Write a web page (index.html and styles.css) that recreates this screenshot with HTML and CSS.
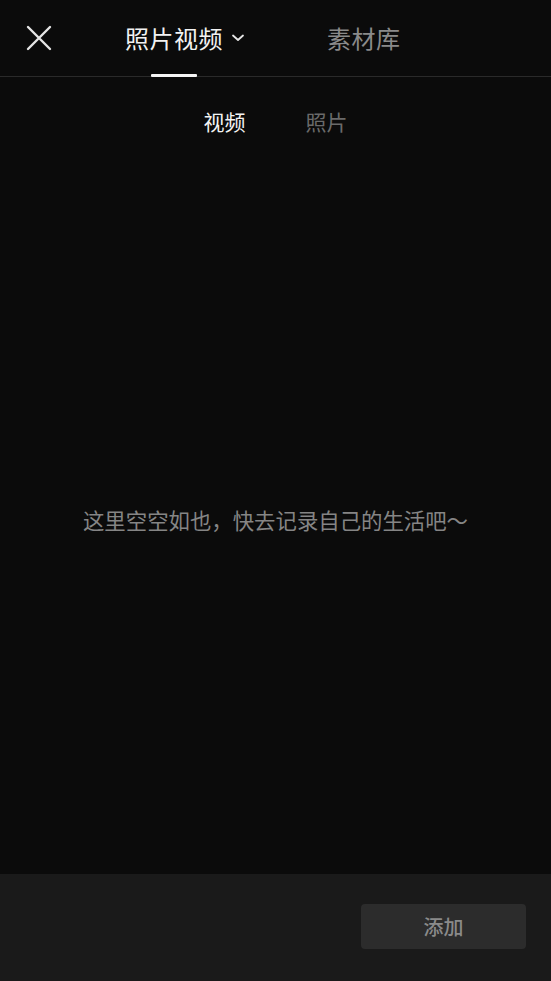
FILE: index.html
```html
<!DOCTYPE html>
<html lang="zh">
<head>
<meta charset="utf-8">
<link rel="stylesheet" href="styles.css">
</head>
<body>
<div class="app">
  <header class="topbar">
    <button class="close" aria-label="关闭">
      <svg width="26" height="26" viewBox="0 0 26 26"><path d="M2 2 L24 24 M24 2 L2 24" stroke="#e6e6e6" stroke-width="2.4" stroke-linecap="round"/></svg>
    </button>
    <div class="tab active">
      <span class="tab-label">照片视频</span>
      <svg class="chev" width="14" height="8" viewBox="0 0 14 8"><path d="M2 1.5 L7 6 L12 1.5" fill="none" stroke="#e6e6e6" stroke-width="1.8" stroke-linecap="round" stroke-linejoin="round"/></svg>
      <span class="underline"></span>
    </div>
    <div class="tab muted"><span class="tab-label">素材库</span></div>
  </header>
  <nav class="subtabs">
    <span class="sub active">视频</span>
    <span class="sub">照片</span>
  </nav>
  <main class="empty">
    <p>这里空空如也，快去记录自己的生活吧～</p>
  </main>
  <footer class="bottombar">
    <button class="add">添加</button>
  </footer>
</div>
</body>
</html>
```
FILE: styles.css
```css
* { box-sizing: border-box; }
html, body { margin: 0; padding: 0; height: 100%; }
body {
  background: #0b0b0b;
  font-family: "Noto Sans CJK SC", "Noto Sans", sans-serif;
  color: #eee;
}
.app {
  display: flex;
  flex-direction: column;
  height: 981px;
}
.topbar {
  height: 77px;
  border-bottom: 1px solid #2a2a2a;
  display: flex;
  align-items: center;
  position: relative;
}
.close {
  background: none;
  border: 0;
  padding: 0;
  margin-left: 26px;
  width: 26px;
  height: 26px;
  display: flex;
  margin-top: -1px;
}
.tab {
  position: relative;
  display: flex;
  align-items: center;
  height: 100%;
}
.tab.active { margin-left: 73px; }
.tab-label {
  font-size: 24px;
  line-height: 1;
  color: #f2f2f2;
  letter-spacing: 0.5px;
}
.chev { margin-left: 8px; margin-top: 0; }
.underline {
  position: absolute;
  left: 26px;
  bottom: -1px;
  width: 46px;
  height: 3px;
  border-radius: 1px;
  background: #f5f5f5;
}
.tab.muted { margin-left: 82px; }
.tab.muted .tab-label { color: #8a8a8a; }
.subtabs {
  display: flex;
  justify-content: center;
  gap: 60px;
  padding-top: 29px;
  height: 92px;
}
.sub {
  font-size: 21px;
  line-height: 30px;
  color: #6a6a6a;
}
.sub.active { color: #f4f4f4; }
.empty {
  flex: 1;
  display: flex;
  justify-content: center;
  padding-top: 336px;
}
.empty p {
  margin: 0;
  font-size: 21.4px;
  line-height: 30px;
  color: #858585;
}
.bottombar {
  height: 107px;
  background: #1a1a1a;
  display: flex;
  justify-content: flex-end;
  align-items: flex-start;
  padding-top: 30px;
  padding-right: 25px;
}
.add {
  width: 165px;
  height: 45px;
  border: 0;
  border-radius: 4px;
  background: #2c2c2c;
  color: #8a8a8a;
  font-family: "Noto Sans CJK SC", sans-serif;
  font-size: 20px;
  font-weight: 500;
}
```
